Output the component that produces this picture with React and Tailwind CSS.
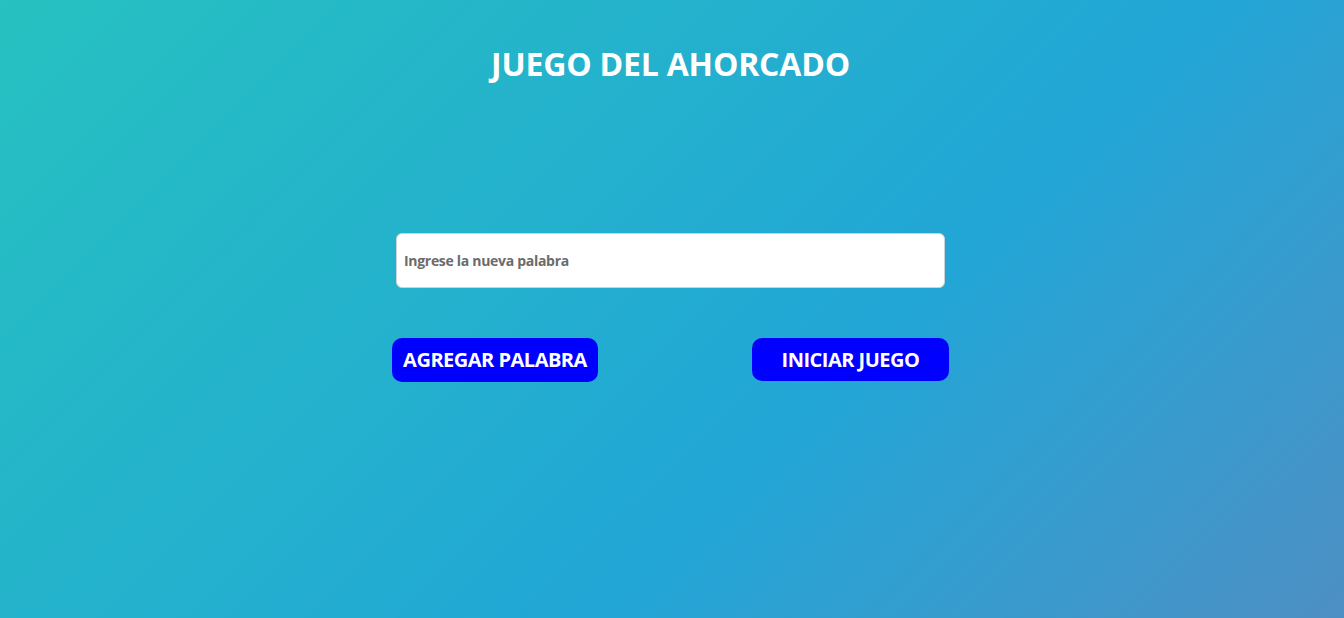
import React, { useState } from 'react';

// Pantalla inicial del juego del ahorcado
export default function App() {
  const [palabra, setPalabra] = useState('');

  return (
    <div
      className="min-h-screen w-full flex flex-col items-center pr-[3px] bg-[linear-gradient(135deg,#26c1c0_0%,#22a6d6_62%,#4d8fc4_100%)]"
      style={{ fontFamily: '"Open Sans", "Noto Sans", sans-serif' }}
    >
      {/* Título */}
      <h1 className="mt-[44px] text-[32px] leading-[40px] font-bold text-white tracking-[-0.2px]">
        JUEGO DEL AHORCADO
      </h1>

      <div className="w-[557px] mt-[149px] flex flex-col">
        {/* Campo de la palabra */}
        <input
          type="text"
          value={palabra}
          onChange={(e) => setPalabra(e.target.value)}
          placeholder="Ingrese la nueva palabra"
          className="mx-auto w-[549px] h-[55px] bg-white border border-[#c9d3d8] rounded-[6px] px-[7px] text-[14px] font-bold text-[#555] placeholder:text-[#6b6b6b] outline-none tracking-[-0.3px]"
        />

        {/* Botones */}
        <div className="mt-[50px] flex justify-between items-start">
          <button className="w-[206px] h-[44px] bg-[#0000ff] text-white text-[20px] font-bold rounded-[10px] tracking-[-0.5px]">
            AGREGAR PALABRA
          </button>
          <button className="w-[197px] h-[43px] bg-[#0000ff] text-white text-[20px] font-bold rounded-[10px] tracking-[-0.5px]">
            INICIAR JUEGO
          </button>
        </div>
      </div>
    </div>
  );
}
